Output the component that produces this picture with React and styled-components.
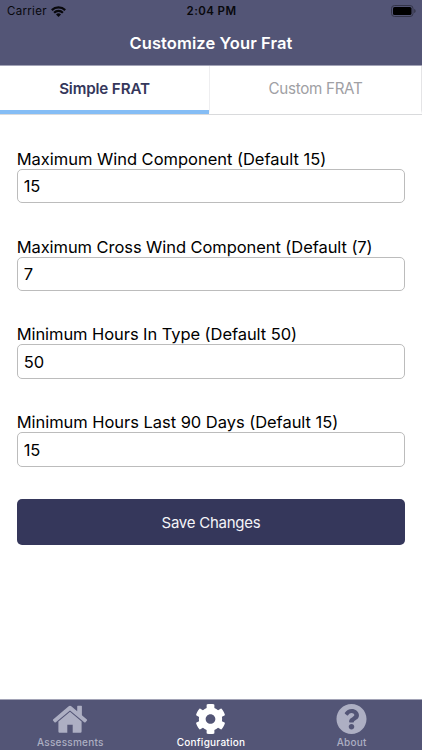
import React from 'react'
import styled, { createGlobalStyle } from "styled-components";
import { FaCog, FaQuestionCircle } from "react-icons/fa";

const fields = [
    { name: "wind", label: "Maximum Wind Component (Default 15)", value: "15", spacing: "-0.02px" },
    { name: "crossWind", label: "Maximum Cross Wind Component (Default (7)", value: "7", spacing: "-0.07px" },
    { name: "hoursInType", label: "Minimum Hours In Type (Default 50)", value: "50", spacing: "-0.07px" },
    { name: "hoursLast90", label: "Minimum Hours Last 90 Days (Default 15)", value: "15", spacing: "-0.04px" }
]

const GlobalStyle = createGlobalStyle`
  * {
    box-sizing: border-box;
  }

  body {
    margin: 0;
    background: #fff;
    font-family: Inter, "Liberation Sans", sans-serif;
  }
`;

const Screen = styled.div`
  display: flex;
  flex-direction: column;
  width: 422px;
  height: 750px;
  overflow: hidden;
  background: #fff;
`;

const Header = styled.header`
  height: 66px;
  background: #535576;
  border-bottom: 1px solid #a2a3b6;
`;

const StatusBar = styled.div`
  display: grid;
  grid-template-columns: 1fr auto 1fr;
  align-items: center;
  height: 22px;
  padding: 0 6px 0 7px;
  color: #08080c;
  font-size: 11.5px;
`;

const Carrier = styled.div`
  display: flex;
  align-items: center;
  gap: 4px;
  letter-spacing: 0.3px;
`;

const Time = styled.div`
  font-weight: 600;
  letter-spacing: 0.4px;
`;

const Battery = styled.svg`
  justify-self: end;
`;

const Title = styled.h1`
  margin: 0;
  height: 43px;
  line-height: 43px;
  text-align: center;
  color: #fff;
  font-size: 16.5px;
  font-weight: 600;
  letter-spacing: 0.1px;
`;

const Tabs = styled.div`
  display: grid;
  grid-template-columns: 209px 1fr;
  height: 49px;
  border-bottom: 1px solid #d9dadc;
`;

const Tab = styled.button`
  height: 48px;
  padding: 0;
  border: 0;
  border-right: ${props => (props.$active ? "0" : "1px solid #e4e4e6")};
  border-left: ${props => (props.$active ? "0" : "1px solid #eeeef0")};
  border-bottom: 4px solid ${props => (props.$active ? "#85bdf5" : "transparent")};
  background: none;
  color: ${props => (props.$active ? "#35375b" : "#a0a0a4")};
  font-family: inherit;
  font-size: 15.2px;
  font-weight: ${props => (props.$active ? 600 : 400)};
  letter-spacing: ${props => (props.$active ? "-0.15px" : "-0.3px")};
`;

const Form = styled.form`
  flex: 1;
  padding: 33.7px 16.67px 0;
`;

const Field = styled.div`
  height: 87.85px;
`;

const Label = styled.label`
  display: block;
  height: 20px;
  line-height: 20px;
  color: #000;
  font-size: 16.5px;
  letter-spacing: ${props => props.$spacing};
  white-space: nowrap;
`;

const Input = styled.input`
  display: block;
  width: 100%;
  height: 34.6px;
  padding: 1px 6px 0;
  border: 1px solid #bcbcbc;
  border-radius: 5px;
  background: #fff;
  color: #000;
  font-family: inherit;
  font-size: 16.5px;
  outline: none;
`;

const SaveButton = styled.button`
  display: block;
  width: 100%;
  height: 45.2px;
  margin-top: -0.7px;
  padding: 1px 0 0;
  border: 0;
  border-radius: 5px;
  background: #35375b;
  color: #f4f4f8;
  font-family: inherit;
  font-size: 15px;
  letter-spacing: -0.25px;
`;

const TabBar = styled.nav`
  display: flex;
  height: 51px;
  border-top: 1px solid #a2a3b6;
  background: #535576;
`;

const TabItem = styled.a`
  flex: 1;
  display: flex;
  flex-direction: column;
  align-items: center;
  padding-top: 3px;
  color: ${props => (props.$active ? "#fff" : "#adafc3")};
  font-size: 10px;
  font-weight: 500;
  line-height: 14px;
  letter-spacing: 0.25px;

  svg {
    display: block;
    width: 31px;
    height: 32px;
    margin-right: 1px;
    overflow: visible;
  }
`;

const WifiIcon = () => (
    <svg width="15" height="11" viewBox="0 0 15 11">
        <g fill="none" stroke="#08080c" strokeWidth="2.2">
            <path d="M0.8 4.1a9.5 9.5 0 0 1 13.4 0" />
            <path d="M3.1 6.8a6.2 6.2 0 0 1 8.8 0" />
        </g>
        <path d="M7.5 11 5 8.5a3.5 3.5 0 0 1 5 0z" fill="#08080c" />
    </svg>
)

const BatteryIcon = () => (
    <Battery width="25" height="12" viewBox="0 0 25 12">
        <rect x="0.5" y="0.5" width="21.5" height="11" rx="3" fill="none" stroke="#343549" />
        <rect x="2" y="2" width="18.5" height="8" rx="1.6" fill="#000" />
        <path d="M23.2 4v4c1-.3 1.4-1.1 1.4-2s-.4-1.7-1.4-2z" fill="#343549" />
    </Battery>
)

// roof with chimney, then the walls with the door cut out
const HomeIcon = () => (
    <svg viewBox="-0.5 0 31 32" fill="currentColor">
        <path d="M13.9 3.4q1.6-1.4 3.2 0l5.6 4.8V3.3q0-.6.6-.6h3.5q.6 0 .6.6v8.9l5 4.3q.5.5.1 1l-1.5 1.8q-.5.5-1 .1L15.5 7.4 1 19.4q-.5.4-1-.1l-1.5-1.8q-.4-.5.1-1z" />
        <path d="M15.5 8.8 27.1 18.5v10q0 1.2-1.2 1.2h-7.7v-8h-5.4v8H5.1q-1.2 0-1.2-1.2v-10z" />
    </svg>
)

class App extends React.Component{
    state = {
        tab: "simple",
        values: Object.fromEntries(fields.map(field => [field.name, field.value]))
    }

    changeValue = (name, value) => {
        this.setState({ values: { ...this.state.values, [name]: value } });
    };

    render(){
        const { tab, values } = this.state;

        return(
            <Screen>
                <GlobalStyle />
                <Header>
                    <StatusBar>
                        <Carrier>Carrier <WifiIcon /></Carrier>
                        <Time>2:04 PM</Time>
                        <BatteryIcon />
                    </StatusBar>
                    <Title>Customize Your Frat</Title>
                </Header>
                <Tabs>
                    <Tab $active={tab === "simple"} onClick={() => this.setState({ tab: "simple" })}>Simple FRAT</Tab>
                    <Tab $active={tab === "custom"} onClick={() => this.setState({ tab: "custom" })}>Custom FRAT</Tab>
                </Tabs>
                <Form onSubmit={(event) => event.preventDefault()}>
                    {fields.map(field => (
                        <Field key={field.name}>
                            <Label htmlFor={field.name} $spacing={field.spacing}>{field.label}</Label>
                            <Input
                                id={field.name}
                                value={values[field.name]}
                                onChange={(event) => this.changeValue(field.name, event.target.value)}
                            />
                        </Field>
                    ))}
                    <SaveButton>Save Changes</SaveButton>
                </Form>
                <TabBar>
                    <TabItem><HomeIcon />Assessments</TabItem>
                    <TabItem $active><FaCog />Configuration</TabItem>
                    <TabItem><FaQuestionCircle />About</TabItem>
                </TabBar>
            </Screen>
        )
    }
}

export default App;
